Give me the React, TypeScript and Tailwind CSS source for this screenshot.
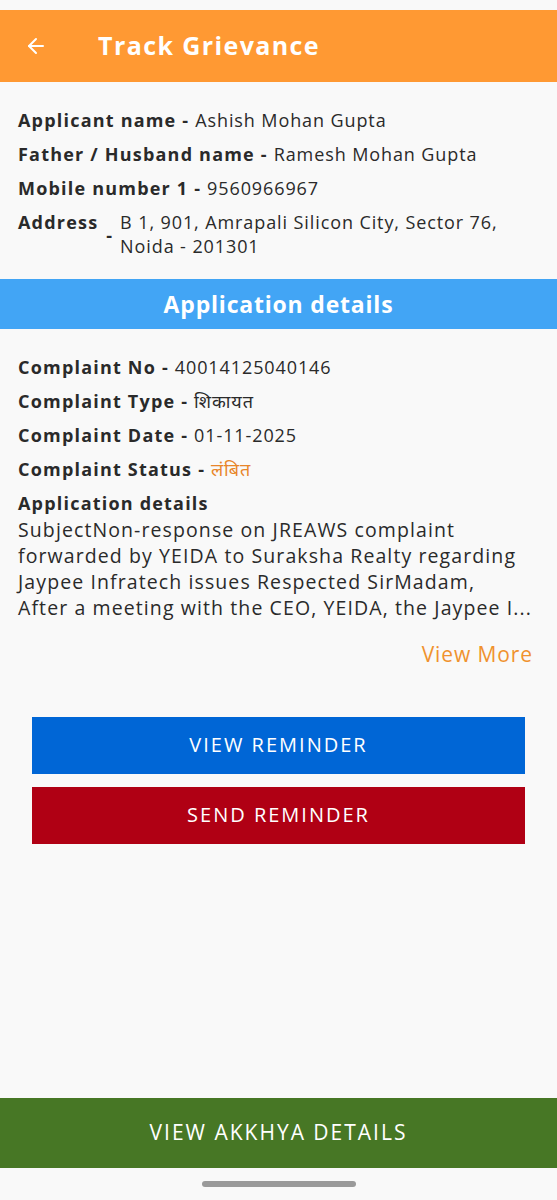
import React from 'react';
import { ArrowLeft } from 'lucide-react';

// one "label - value" line of the applicant / complaint blocks
const InfoRow = ({ label, value, valueClass = '' }: { label: string; value: string; valueClass?: string }) => (
  <p className="leading-[24px]">
    <span className="font-bold tracking-[1.2px]">{label} - </span>
    <span className={`tracking-[0.9px] ${valueClass}`}>{value}</span>
  </p>
);

export default function App() {
  return (
    <div
      className="min-h-[1200px] w-full flex flex-col bg-[#f9f9f9] text-[#2a2a2a]"
      style={{ fontFamily: '"Open Sans", "Noto Sans", sans-serif' }}
    >
      <div className="h-[10px] bg-[#f9f9f9]" />

      {/* header */}
      <div className="h-[72px] bg-[#ff9933] flex items-center px-[24px] text-white">
        <ArrowLeft size={24} strokeWidth={2} />
        <h1 className="ml-[50px] text-[25px] font-bold tracking-[1.4px]">Track Grievance</h1>
      </div>

      {/* applicant */}
      <div className="px-[18px] pt-[26px] pb-[21px] text-[18px] flex flex-col gap-[10px]">
        <InfoRow label="Applicant name" value="Ashish Mohan Gupta" />
        <InfoRow label="Father / Husband name" value="Ramesh Mohan Gupta" />
        <InfoRow label="Mobile number 1" value="9560966967" />
        <div className="flex leading-[24px]">
          <span className="font-bold tracking-[1.2px]">Address</span>
          <span className="font-bold self-center ml-[8px] mr-[8px] mt-[2px]">-</span>
          <span className="tracking-[0.9px]">
            B 1, 901, Amrapali Silicon City, Sector 76,
            <br />
            Noida - 201301
          </span>
        </div>
      </div>

      <div className="h-[50px] bg-[#42a5f5] flex items-center justify-center text-white text-[23px] font-bold tracking-[0.8px]">
        Application details
      </div>

      {/* complaint */}
      <div className="px-[18px] pt-[26px] text-[18px] flex flex-col gap-[10px]">
        <InfoRow label="Complaint No" value="40014125040146" />
        <InfoRow label="Complaint Type" value="शिकायत" />
        <InfoRow label="Complaint Date" value="01-11-2025" />
        <InfoRow label="Complaint Status" value="लंबित" valueClass="text-[#e8862a]" />
        <div className="flex flex-col">
          <p className="font-bold leading-[24px] tracking-[1.2px]">Application details</p>
          <div className="text-[19.5px] leading-[26px] tracking-[1.1px] mt-[2px] whitespace-nowrap">
            <p>SubjectNon-response on JREAWS complaint</p>
            <p>forwarded by YEIDA to Suraksha Realty regarding</p>
            <p>Jaypee Infratech issues Respected SirMadam,</p>
            <p>After a meeting with the CEO, YEIDA, the Jaypee I...</p>
          </div>
        </div>
        <p className="text-right text-[21px] text-[#f0922e] tracking-[0.9px] pr-[6px] mt-[8px]">View More</p>
      </div>

      {/* actions */}
      <div className="px-[32px] mt-[46px] flex flex-col gap-[13px]">
        <button className="h-[57px] bg-[#0066d6] text-white text-[20px] tracking-[2px] uppercase">View Reminder</button>
        <button className="h-[57px] bg-[#b00014] text-white text-[20px] tracking-[2px] uppercase">Send Reminder</button>
      </div>

      <div className="flex-1" />

      <button className="h-[70px] bg-[#477725] text-white text-[21px] tracking-[2px] uppercase">View Akkhya Details</button>
      <div className="h-[32px] flex items-start justify-center pt-[13px]">
        <div className="w-[154px] h-[6px] rounded-full bg-[#9a9a9a]" />
      </div>
    </div>
  );
}
